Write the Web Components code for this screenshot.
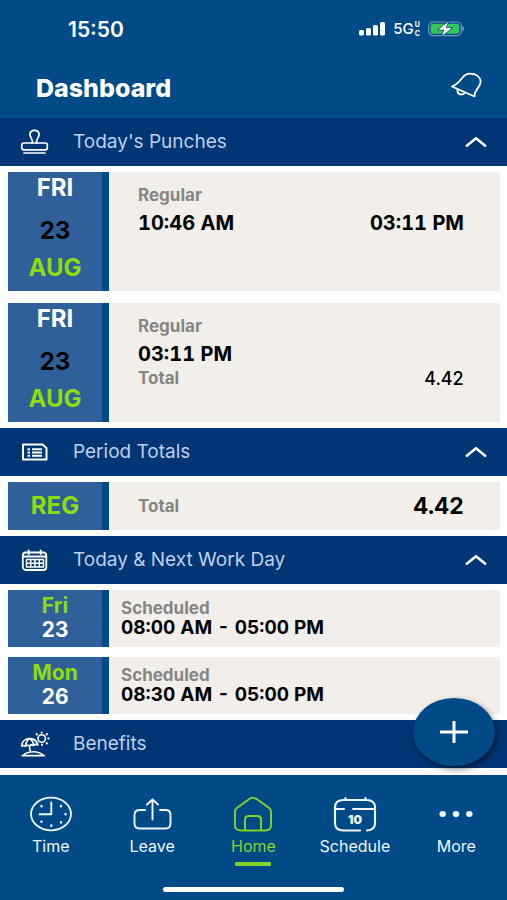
<!DOCTYPE html>
<html lang="en">
<head>
<meta charset="utf-8">
<meta name="viewport" content="width=device-width, initial-scale=1">
<title>Dashboard</title>
<style>
  body {
    margin: 0;
    background: #fff;
    font-family: Inter, "Liberation Sans", sans-serif;
    --primary: #004a87;
    --bar: #003675;
    --tile: #2f609a;
    --card: #f2efea;
    --muted: #868582;
    --green: #8fdc0c;
  }
</style>
</head>
<body>
<dash-app>
  <dash-header slot="header" time="15:50" heading="Dashboard"></dash-header>

  <dash-section heading="Today's Punches" icon="stamp">
    <punch-card day="FRI" date="23" month="AUG" kind="Regular" start="10:46 AM" end="03:11 PM"></punch-card>
    <punch-card day="FRI" date="23" month="AUG" kind="Regular" start="03:11 PM" total="4.42"></punch-card>
  </dash-section>

  <dash-section heading="Period Totals" icon="list">
    <total-card code="REG" label="Total" value="4.42"></total-card>
  </dash-section>

  <dash-section heading="Today &amp; Next Work Day" icon="calendar">
    <shift-card day="Fri" date="23" label="Scheduled" hours="08:00 AM - 05:00 PM"></shift-card>
    <shift-card day="Mon" date="26" label="Scheduled" hours="08:30 AM - 05:00 PM"></shift-card>
  </dash-section>

  <dash-section heading="Benefits" icon="beach"></dash-section>

  <tab-bar slot="footer">
    <add-button slot="action"></add-button>
    <tab-item icon="clock">Time</tab-item>
    <tab-item icon="leave">Leave</tab-item>
    <tab-item icon="home" current>Home</tab-item>
    <tab-item icon="schedule">Schedule</tab-item>
    <tab-item icon="more">More</tab-item>
  </tab-bar>
</dash-app>

<script>
const svg = (w, h, body, sw = 1.6) =>
  `<svg width="${w}" height="${h}" viewBox="0 0 ${w} ${h}" fill="none" stroke="currentColor" stroke-width="${sw}" stroke-linecap="round" stroke-linejoin="round" aria-hidden="true">${body}</svg>`;

const ICONS = {
  bell: svg(32, 28, '<path d="M2 15.500C7.500 13.500 9.500 10.500 12 7.200 15 3 19.500 1.800 24 3.200c5 1.600 7.300 5.300 6.300 9.300-1.300 5-6.300 7-5.800 13z"/><path d="M7.500 18.500c-.3 2.600 1.200 4.700 3.700 5 1.700.1 3-.5 3.800-1.900"/>', 1.8),
  stamp: svg(30, 28, '<path d="M12.300 15c1-4-2.500-5.500-2.400-8.500.2-2.900 2.200-4.200 4.600-4.200s4.400 1.300 4.600 4.200c.1 3-3.400 4.500-2.400 8.500"/><rect x="1.800" y="15" width="25.500" height="6.800" rx="2"/><path d="M4 25h21"/>', 1.7),
  list: svg(30, 28, '<path d="M3 6.500h19.500l4 3.500v11.500H3z" stroke-width="2"/><path d="M12 11.300h10M12 14.500h10M12 17.700h10" stroke-width="1.900" stroke-linecap="butt"/><path d="M7.500 11.300h2.500M7.500 14.500h2.500M7.500 17.700h2.500" stroke-width="1.900" stroke-linecap="butt"/>'),
  calendar: svg(30, 28, '<rect x="2.800" y="6.500" width="23.500" height="17.500" rx="3"/><path d="M3 10.500h23" stroke-width="1.800"/><path d="M8.700 4.500v3.500M20.700 4.500v3.500" stroke-width="2"/><path d="M6.500 13.500h17v7.500h-17zM6.500 17.200h17M10.700 13.500v7.500M15 13.500v7.500M19.300 13.500v7.500" stroke-width="1.500"/>', 1.8),
  beach: svg(30, 28, '<path d="M1.700 16.200C1.800 11.500 5 8.800 9 8.600c4.600-.2 8 2.400 8.800 6.400-1.300-.9-2.800-.8-4.100.5-1.500-1-3-.9-4.200.4-1.400-1-2.700-.9-3.900.3-1.300-.8-2.700-.8-3.900 0z"/><path d="M9 8.600c-2 1.700-3.300 4.200-3.400 7.400M9 8.600c2.700 1.200 4.300 3.600 4.700 6.700M9.300 15.500l1 6"/><path d="M2 25.600h22.500M3.500 25.200c4.500-4.300 14.500-4.800 19.500 0"/><circle cx="21.700" cy="8.500" r="3.700"/><path d="M21.700 2.400v.4M16.500 4l.5.500M27 4l-.5.500M28.700 8.500h-.5M27 13.500l-.5-.5M22 15v-.5" stroke-width="1.800"/>', 1.6),
  chevron: svg(22, 12, '<path d="M1.800 9.800 11 2.200l9.200 7.600"/>', 2.5),
  clock: svg(44, 36, '<ellipse cx="22" cy="18" rx="20" ry="16.300"/><path d="M22.300 6.500V18.300H10.500" stroke-width="1.900"/><path d="M32 10v.2M36.500 18.300h.2M32 26.300v.2M22.300 29.500v.2M12.500 25.500v.2M12.500 10v.2" stroke-width="2.400"/>', 1.8),
  leave: svg(44, 36, '<path d="M15 14h-5.500q-5 0-5 5v8.500q0 5 5 5h26q5 0 5-5V19q0-5-5-5H30"/><path d="M22.500 23.500V4M17 8.500 22.500 3.500 28 8.500" stroke-width="1.900"/>', 1.9),
  home: svg(44, 36, '<path d="M4 15.500q0-2.500 2.500-4L18 3.200q4-2.600 8 0l11.500 8.300q2.500 1.500 2.500 4V29q0 5.500-6 5.500H10q-6 0-6-5.500z"/><path d="M14 34V23.500q0-3.500 4-3.500h8q4 0 4 3.500V34"/>', 1.9),
  schedule: svg(44, 36, '<path d="M27 34.500H10.500Q2 34.500 2 27V11.500Q2 4 10.500 4h23Q42 4 42 11.500V27q0 7-8 7.500M12.500 2v2M32.500 2v2M2 13h9M20 13h21"/><text x="22" y="28" text-anchor="middle" fill="currentColor" stroke="none" font-family="Inter, sans-serif" font-weight="900" font-size="12">10</text>', 2.1),
  more: svg(44, 36, '<g fill="currentColor" stroke="none"><ellipse cx="8.700" cy="18" rx="3.300" ry="3"/><ellipse cx="22" cy="18" rx="3.300" ry="3"/><ellipse cx="35.300" cy="18" rx="3.300" ry="3"/></g>'),
  plus: svg(28, 24, '<path d="M14 1v22M0 12h28" stroke-linecap="butt"/>', 3),
  signal: svg(26, 14, '<g fill="currentColor" stroke="none"><rect y="8" width="5" height="5.500" rx="1.500"/><rect x="7" y="6" width="5" height="7.500" rx="1.500"/><rect x="14" y="3" width="5" height="10.500" rx="1.500"/><rect x="21" width="5" height="13.500" rx="1.500"/></g>'),
  battery: svg(37, 16, '<rect x=".7" y="1" width="32.600" height="13.600" rx="4.500" stroke="#6f9cc2" stroke-width="1.200"/><path d="M35 5.800q2 2-0 4z" fill="#6f9cc2" stroke="#6f9cc2" stroke-width=".8"/><rect x="2.600" y="2.800" width="28.800" height="10" rx="2.800" fill="#34c759" stroke="none"/><path d="M20.500 0 9.500 9h6.300l-2.600 7.200L24.500 6.800h-6.300z" fill="#fff" stroke="#004a87" stroke-width="1"/><path d="M20 1.300 11 8.500h5.600l-2.200 5.800 8.800-7h-5.800z" fill="#fff" stroke="none"/>')
};

class Base extends HTMLElement {
  connectedCallback() {
    if (this.shadowRoot) return;
    this.attachShadow({ mode: 'open' }).innerHTML =
      `<style>*{box-sizing:border-box}svg{display:block}p,h1,h2{margin:0}${this.css}</style>${this.html}`;
  }
  at(name) {
    return (this.getAttribute(name) || '').replace(/&/g, '&amp;').replace(/</g, '&lt;');
  }
}

customElements.define('dash-app', class extends Base {
  css = `
    :host { display: flex; flex-direction: column; min-height: 100vh; }
    main { flex: 1; }
    footer { position: sticky; bottom: 0; }`;
  html = `<slot name="header"></slot><main><slot></slot></main><footer><slot name="footer"></slot></footer>`;
});

customElements.define('dash-header', class extends Base {
  css = `
    :host { display: block; background: var(--primary); color: #fff; padding-bottom: 12px; }
    .status { display: flex; align-items: center; height: 58px; padding: 0 42px 0 68px; }
    .time { margin-right: auto; font-size: 21px; font-weight: 600; }
    .net { display: flex; align-items: center; margin: 0 8px; font-size: 15px; line-height: 16px; font-weight: 500; }
    .uc { display: grid; margin-left: 1px; font-size: 7px; line-height: 9px; font-weight: 700; }
    .title { display: flex; align-items: center; justify-content: space-between; height: 48px; padding: 0 25px 0 36px; }
    h1 { font-size: 25px; line-height: 32px; font-weight: 800; padding-top: 12px; }
    button { border: 0; background: none; color: inherit; padding: 6px 0 0; }`;
  get html() {
    return `<div class="status"><span class="time">${this.at('time')}</span>${ICONS.signal}
      <span class="net">5G<span class="uc"><span>U</span><span>C</span></span></span>${ICONS.battery}</div>
      <div class="title"><h1>${this.at('heading')}</h1><button type="button" aria-label="Notifications">${ICONS.bell}</button></div>`;
  }
});

customElements.define('dash-section', class extends Base {
  css = `
    :host { display: block; }
    h2 { font: inherit; }
    button { display: flex; align-items: center; width: 100%; height: 48px; padding: 0 20px; border: 0;
      background: var(--bar); color: #fff; font: 400 19px/24px Inter, sans-serif; text-align: left; }
    .label { flex: 1; padding-left: 23px; color: #bfd0ec; }
    .body { display: grid; padding: 6px 7px 6px 8px; row-gap: 10px; }
    .body.empty { padding: 0; }`;
  get html() {
    const empty = this.children.length ? '' : ' empty';
    return `<h2><button type="button" aria-expanded="${!empty}">${ICONS[this.at('icon')]}<span class="label">${this.at('heading')}</span>${ICONS.chevron}</button></h2>
      <div class="body${empty}"><slot></slot></div>`;
  }
});

const CARD_CSS = `
  :host { display: grid; grid-template-columns: 101px 1fr; background: var(--card); color: #000; font-variant-numeric: tabular-nums; }
  .tile { display: grid; justify-items: center; background: var(--tile); border-right: 7px solid var(--primary); font-weight: 700; line-height: 24px; }
  .line { display: flex; justify-content: space-between; align-items: center; }
  .green { color: var(--green); }
  .white { color: #fff; }`;
const MUTED_CSS = `.muted { color: var(--muted); font-size: 17px; font-weight: 700; }`;

customElements.define('punch-card', class extends Base {
  css = CARD_CSS + `
    :host(:not(:last-of-type)) { margin-bottom: 2px; }
    .tile { font-size: 24px; padding: 4px 0 11px; }
    .date { padding: 19px 0 13px; }
    .info { padding: 9px 36px 0 29px; }
    .line { height: 28px; font-size: 20px; font-weight: 700; }
    .total { height: 20px; }
    .total .sum { font-size: 18px; font-weight: 500; }` + MUTED_CSS;
  get html() {
    const total = this.at('total');
    return `<div class="tile"><span class="white">${this.at('day')}</span><span class="date">${this.at('date')}</span><span class="green">${this.at('month')}</span></div>
      <div class="info"><div class="line muted">${this.at('kind')}</div>
      <div class="line"><span>${this.at('start')}</span><span>${this.at('end')}</span></div>
      ${total ? `<div class="line total"><span class="muted">Total</span><span class="sum">${total}</span></div>` : ''}</div>`;
  }
});

customElements.define('total-card', class extends Base {
  css = CARD_CSS + `
    .tile { align-content: center; font-size: 24px; padding: 12px 0; }
    .line { padding: 0 36px 0 29px; }
    .value { font-size: 23px; font-weight: 700; }` + MUTED_CSS;
  get html() {
    return `<div class="tile"><span class="green">${this.at('code')}</span></div>
      <div class="line"><span class="muted">${this.at('label')}</span><span class="value">${this.at('value')}</span></div>`;
  }
});

customElements.define('shift-card', class extends Base {
  css = CARD_CSS + `
    .tile { font-size: 21px; padding: 4px 0 5px; }
    .info { padding: 8px 12px 9px; line-height: 20px; }
    .hours { font-size: 19px; font-weight: 700; }` + MUTED_CSS;
  get html() {
    return `<div class="tile"><span class="green">${this.at('day')}</span><span class="white">${this.at('date')}</span></div>
      <div class="info"><p class="muted">${this.at('label')}</p><p class="hours">${this.at('hours')}</p></div>`;
  }
});

customElements.define('tab-bar', class extends Base {
  css = `
    :host { display: block; position: relative; background: var(--primary); padding: 21px 0 8px; margin-top: 7px; }
    nav { display: grid; grid-template-columns: repeat(5, 1fr); }
    .grip { width: 181px; height: 5px; margin: 21px auto 0; border-radius: 3px; background: #fff; }
    .action { position: absolute; right: 12px; bottom: 100%; padding-bottom: 9px; }`;
  html = `<div class="action"><slot name="action"></slot></div><nav aria-label="Main"><slot></slot></nav><div class="grip"></div>`;
});

customElements.define('tab-item', class extends Base {
  css = `
    :host { display: block; color: #f0f6ff; }
    :host([current]) { color: #84d428; }
    a { display: grid; justify-items: center; color: inherit; text-decoration: none; font-size: 16px; line-height: 20px; }
    .label { padding-top: 4px; }
    .mark { width: 36px; height: 4px; margin-top: 6px; border-radius: 1px; }
    :host([current]) .mark { background: currentColor; }`;
  get html() {
    return `<a href="#"${this.hasAttribute('current') ? ' aria-current="page"' : ''}>${ICONS[this.at('icon')]}<span class="label"><slot></slot></span><span class="mark"></span></a>`;
  }
});

customElements.define('add-button', class extends Base {
  css = `
    :host { display: block; }
    button { display: grid; place-items: center; width: 82px; height: 68px; padding: 0; border: 0; border-radius: 50%;
      background: var(--primary); color: #fff; box-shadow: 2px 3px 6px rgba(0, 0, 0, .5); }`;
  html = `<button type="button" aria-label="Add">${ICONS.plus}</button>`;
});
</script>
</body>
</html>
